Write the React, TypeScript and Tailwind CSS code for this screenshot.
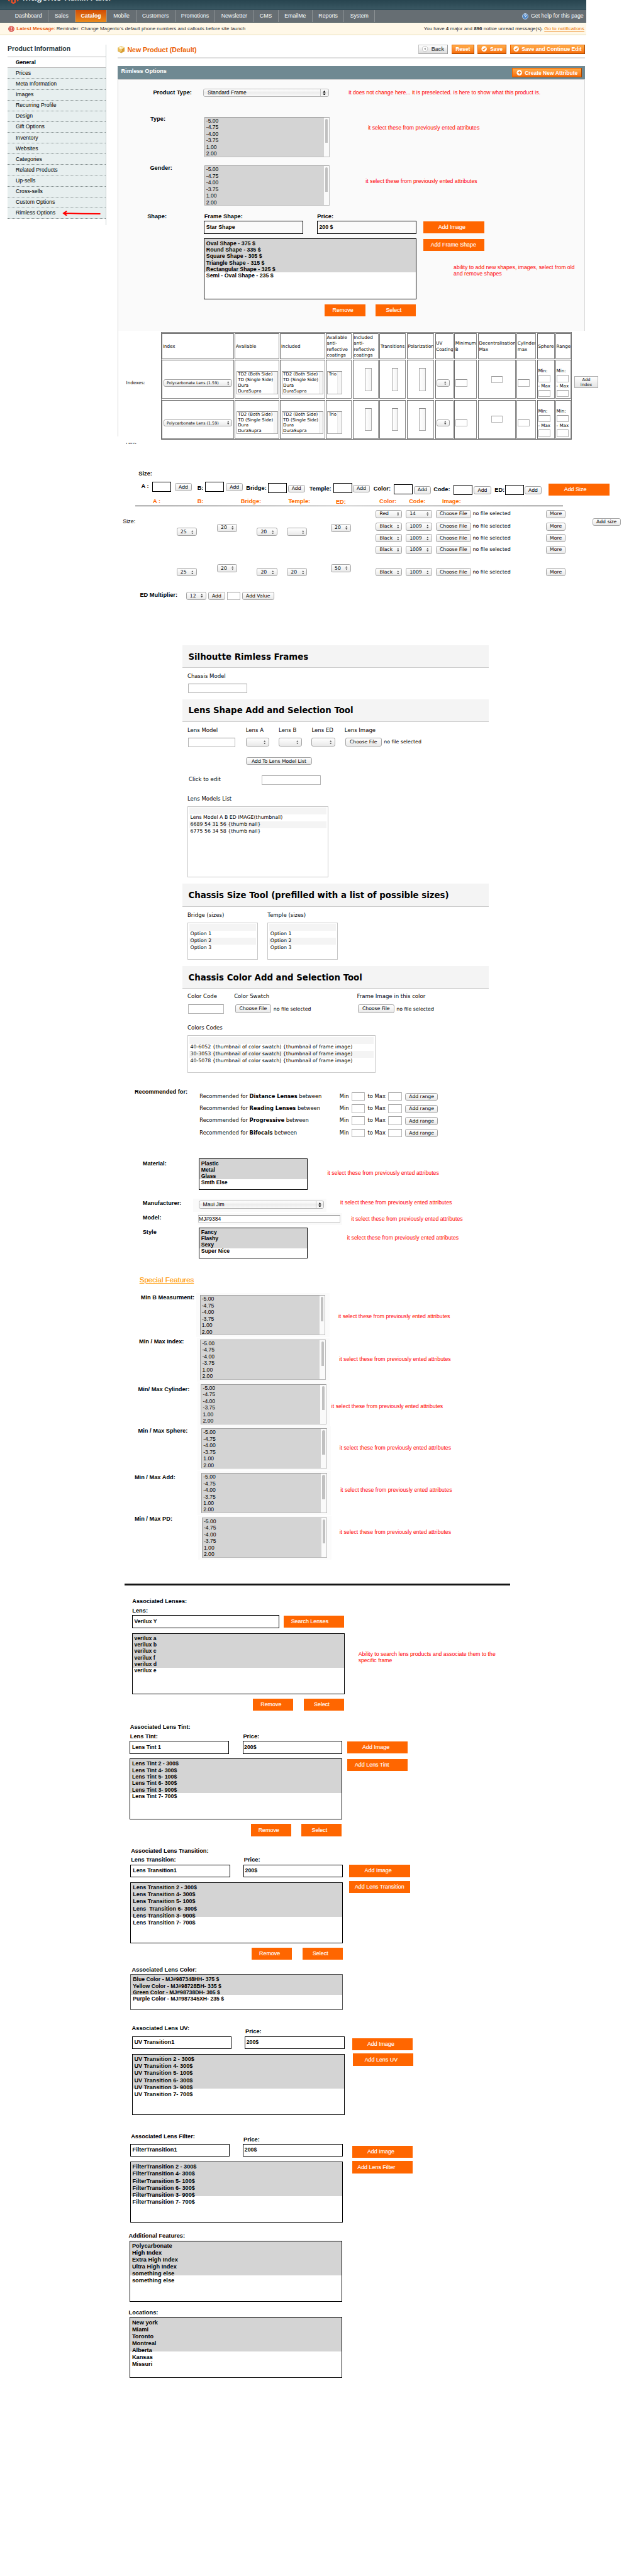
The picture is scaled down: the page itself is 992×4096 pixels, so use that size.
import React from "react";
import { twMerge } from "tailwind-merge";

type Kids = { className?: string; children?: React.ReactNode };

const ui = "font-['DejaVu_Sans',sans-serif]";

/* ---------- small building blocks ---------- */

function Label({ className, children }: Kids) {
  return (
    <div className={twMerge("h-[14px] shrink-0 text-[13px] leading-[14px] font-bold whitespace-nowrap", className)}>
      {children}
    </div>
  );
}

function Note({ className, children }: Kids) {
  return (
    <div className={twMerge("shrink-0 text-[12.25px] leading-[14px] whitespace-nowrap text-[#f00]", className)}>
      {children}
    </div>
  );
}

function Attr({ className }: { className?: string }) {
  return <Note className={className}>it select these from previously ented attributes</Note>;
}

function Flat({ className, children }: Kids) {
  return (
    <button
      className={twMerge(
        "flex h-[27px] shrink-0 items-center bg-[#f60] text-[12.5px] leading-none whitespace-nowrap text-white [-webkit-text-stroke-width:0.2px]",
        className,
      )}
    >
      {children}
    </button>
  );
}

function Box({ className, children }: Kids) {
  return (
    <div
      className={twMerge(
        "flex h-[29px] shrink-0 items-center border border-black text-[12.3px] font-bold whitespace-nowrap",
        className,
      )}
    >
      {children}
    </div>
  );
}

function Bare({ className }: { className?: string }) {
  return <div className={twMerge("shrink-0 border border-black bg-white", className)} />;
}

function Picks({ items, className }: { items: string[]; className?: string }) {
  return (
    <div className={twMerge("shrink-0 overflow-hidden border border-black font-bold whitespace-pre", className)}>
      {items.map((t, i) => (
        <div key={i}>{t}</div>
      ))}
    </div>
  );
}

function Arrows({ className }: { className?: string }) {
  return (
    <svg viewBox="0 0 6 10" className={twMerge("h-[9px] w-[5px] shrink-0", className)}>
      <path d="M3 0 L5.6 3.8 H0.4 Z M3 10 L5.6 6.2 H0.4 Z" fill="#444" />
    </svg>
  );
}

function Aqua({ className, children }: Kids) {
  return (
    <button
      className={twMerge(
        "flex h-[18px] shrink-0 items-center justify-center rounded-[4px] border border-[#a3a3a3] bg-linear-to-b from-white via-[#f4f4f4] to-[#e9e9e9] text-[10.8px] leading-none whitespace-nowrap text-black",
        ui,
        className,
      )}
    >
      {children}
    </button>
  );
}

function Drop({ className, children }: Kids) {
  return (
    <div
      className={twMerge(
        "flex h-[18px] shrink-0 items-center justify-between rounded-[4px] border border-[#a3a3a3] bg-linear-to-b from-white via-[#f4f4f4] to-[#e9e9e9] pr-[6px] pl-[7px] text-[10.8px] leading-none whitespace-nowrap",
        ui,
        className,
      )}
    >
      <span>{children}</span>
      <Arrows />
    </div>
  );
}

function Field({ className }: { className?: string }) {
  return <div className={twMerge("shrink-0 border border-[#b5b5b5] border-t-[#8f8f8f] bg-white", className)} />;
}

function WideSelect({ children }: Kids) {
  return (
    <div className="flex h-[19px] w-[280px] shrink-0 items-center rounded-[4px] border border-[#b4b4b4] bg-linear-to-b from-white via-[#ececec] to-[#fafafa] pl-[8px] text-[12px] leading-none">
      <span className="grow">{children}</span>
      <span className="flex h-full w-[18px] items-center justify-center border-l border-[#c4c4c4]">
        <svg viewBox="0 0 6 10" className="h-[11px] w-[7px]">
          <path d="M3 0 L5.8 4 H0.2 Z M3 10 L5.8 6 H0.2 Z" fill="#000" />
        </svg>
      </span>
    </div>
  );
}

const values = ["-5.00", "-4.75", "-4.00", "-3.75", "1.00", "2.00"];

function ValueList() {
  return (
    <div className="flex h-[90px] w-[280px] shrink-0 border border-[#bdbdbd] border-t-[#9d9d9d] border-l-[#9d9d9d] bg-[#d4d4d4]">
      <div className="grow pl-[3px] text-[12.1px] leading-[14.7px]">
        {values.map((v) => (
          <div key={v}>{v}</div>
        ))}
      </div>
      <div className="flex w-[12px] justify-center bg-[#fafafa] pt-[3px]">
        <div className="h-[54px] w-[6px] rounded-t-full bg-[#c1c1c1]" />
      </div>
    </div>
  );
}

/* ---------- header ---------- */

const nav: [string, string][] = [
  ["Dashboard", "w-[88px]"],
  ["Sales", "w-[60px]"],
  ["Catalog", "w-[71px]"],
  ["Mobile", "w-[65px]"],
  ["Customers", "w-[87px]"],
  ["Promotions", "w-[89px]"],
  ["Newsletter", "w-[86px]"],
  ["CMS", "w-[55px]"],
  ["EmailMe", "w-[76px]"],
  ["Reports", "w-[71px]"],
  ["System", "w-[68px]"],
];

function Header() {
  return (
    <header className="w-[1307px]">
      <div className="flex h-[23px] items-start overflow-hidden border-b-2 border-[#2b4652] bg-linear-to-b from-[#27444f] to-[#3a5863] pl-[17px] text-white">
        <svg viewBox="0 0 26 10" className="h-[9px] w-[26px] shrink-0">
          <path
            d="M0 0 H4 V4 L0 2 Z M22 0 H26 V2 L22 4 Z M7 0 H11 V4.5 L13 6 L15 4.5 V0 H19 V6.5 L13 10 L7 6.5 Z"
            fill="#e8502a"
          />
        </svg>
        <div className="-mt-[19px] ml-[7px] w-[94px] shrink-0 text-[22.5px] leading-[26px]">Magento</div>
        <div className="-mt-[14px] text-[17px] leading-[20px] font-bold whitespace-nowrap text-[#e9eeee]">
          Admin Panel
        </div>
      </div>
      <nav className="flex h-[28px] items-stretch border-b-2 border-[#37474f] bg-[#666e73] pl-[20px] text-[12.3px] text-white">
        {nav.map(([t, w]) => (
          <div
            key={t}
            className={twMerge(
              "flex shrink-0 items-center justify-center border-r border-[#8b9194]",
              w,
              t === "Catalog" && "bg-linear-to-b from-[#d14c05] to-[#ea8a1b] font-bold",
            )}
          >
            {t}
          </div>
        ))}
        <div className="ml-auto flex items-center pr-[6px] whitespace-nowrap">
          <svg viewBox="0 0 14 14" className="mr-[5px] size-[14px]">
            <circle cx="7" cy="7" r="6.3" fill="#4f86c4" stroke="#c9dcf0" strokeWidth="1.2" />
            <path
              d="M4.8 5.4 C4.8 2.9 9.2 2.9 9.2 5.3 C9.2 6.8 7 6.8 7 8.4 M7 9.7 V11"
              stroke="#fff"
              strokeWidth="1.5"
              fill="none"
            />
          </svg>
          Get help for this page
        </div>
      </nav>
      <div className="flex h-[28px] items-center border-b border-[#eadfb9] bg-[#fff8e8] pr-[4px] pl-[18px] text-[11.2px] text-[#2f2f2f]">
        <svg viewBox="0 0 14 14" className="mr-[5px] size-[14px]">
          <circle cx="7" cy="7" r="6.4" fill="#e0544c" stroke="#b9413b" strokeWidth="0.8" />
          <circle cx="7" cy="7" r="5" fill="none" stroke="#f6b8b2" strokeWidth="0.8" />
          <path d="M7 3 V8.2 M7 9.5 V11" stroke="#fff" strokeWidth="1.7" />
        </svg>
        <b className="w-[89px] whitespace-nowrap text-[#ea5c0a]">Latest Message:</b>
        <span className="whitespace-nowrap">
          Reminder: Change Magento`s default phone numbers and callouts before site launch
        </span>
        <span className="ml-auto whitespace-nowrap">
          You have <b>4</b> major and <b>896</b> notice unread message(s).{" "}
          <span className="text-[#ea7601] underline">Go to notifications</span>
        </span>
      </div>
    </header>
  );
}

/* ---------- sidebar ---------- */

const tabs = [
  "Prices",
  "Meta Information",
  "Images",
  "Recurring Profile",
  "Design",
  "Gift Options",
  "Inventory",
  "Websites",
  "Categories",
  "Related Products",
  "Up-sells",
  "Cross-sells",
  "Custom Options",
  "Rimless Options",
];

function Sidebar() {
  return (
    <aside className="mt-[20px] ml-[17px] h-[403px] w-[220px] shrink-0 border-r-2 border-[#c3cccc]">
      <div className="h-[28px] border-b border-[#b6b6b6] pt-[2px] text-[14.7px] leading-[18px] font-bold text-[#2d3b41]">
        Product Information
      </div>
      <div className="h-[25px] border-b border-[#b6b6b6] pl-[18px] text-[12px] leading-[25px] font-bold">General</div>
      {tabs.map((t) => (
        <div
          key={t}
          className="flex h-[24px] items-center border-b border-dotted border-[#7f8a8a] bg-[#e7efef] pl-[18px] text-[12.2px]"
        >
          {t}
          {t === "Rimless Options" && (
            <svg viewBox="0 0 86 12" className="ml-[15px] h-[12px] w-[86px]">
              <path d="M85 7 L44 6.6 L5 5.6 M10 1 L3 5.6 L10 11" stroke="#f00" strokeWidth="3" fill="none" />
            </svg>
          )}
        </div>
      ))}
    </aside>
  );
}

/* ---------- options panel ---------- */

function Glossy({ className, children }: Kids) {
  return (
    <button
      className={twMerge(
        "flex h-[21px] shrink-0 items-center justify-center gap-[6px] border border-[#ed6502] border-r-[#a04300] border-b-[#a04300] bg-linear-to-b from-[#ffac47] to-[#f76c02] text-[12px] leading-none font-bold whitespace-nowrap text-white",
        className,
      )}
    >
      {children}
    </button>
  );
}

function Dot({ kind }: { kind: "check" | "plus" | "back" }) {
  return (
    <svg viewBox="0 0 13 13" className="size-[13px] shrink-0">
      <circle cx="6.5" cy="6.5" r="6" fill="#fff" stroke={kind === "back" ? "#aaa" : "none"} />
      {kind === "check" && <path d="M3.8 7 L5.8 9 L9.4 4" stroke="#f17a1a" strokeWidth="1.8" fill="none" />}
      {kind === "plus" && <path d="M6.5 3 V10 M3 6.5 H10" stroke="#f17a1a" strokeWidth="1.9" />}
      {kind === "back" && <path d="M8 3.8 V9.2 L4.4 6.5 Z" fill="#888" />}
    </svg>
  );
}

function TitleRow() {
  return (
    <div className="flex h-[31px] w-[1042px] items-start border-b-4 border-[#dfdfdf]">
      <svg viewBox="0 0 16 16" className="mt-[4px] mr-[6px] size-[16px]">
        <path d="M8 0.5 L15 4 V12 L8 15.5 L1 12 V4 Z" fill="#eec15a" stroke="#b98a2c" strokeWidth="0.8" />
        <path d="M8 0.5 L15 4 L8 7.5 L1 4 Z" fill="#fbe7a8" />
        <path d="M8 7.5 L15 4 V12 L8 15.5 Z" fill="#d99d31" />
        <path d="M5 3 L11 6 M4 5.5 L8 7.5 V11" stroke="#fffbe8" strokeWidth="1.4" fill="none" />
      </svg>
      <h1 className="mt-[4px] text-[14.8px] leading-[18px] font-bold whitespace-nowrap text-[#eb5e00]">
        New Product (Default)
      </h1>
      <div className="ml-auto flex gap-[8px]">
        <button className="flex h-[21px] w-[66px] items-center justify-center gap-[7px] border border-[#c2c2c2] border-r-[#999] border-b-[#999] bg-linear-to-b from-white to-[#dcdcdc] text-[12px] leading-none font-bold text-[#555]">
          <Dot kind="back" />
          Back
        </button>
        <Glossy className="w-[50px]">Reset</Glossy>
        <Glossy className="w-[64px]">
          <Dot kind="check" />
          Save
        </Glossy>
        <Glossy className="w-[167px]">
          <Dot kind="check" />
          Save and Continue Edit
        </Glossy>
      </div>
    </div>
  );
}

const shapes = [
  "Oval Shape - 375 $",
  "Round Shape - 335 $",
  "Square Shape - 305 $",
  "Triangle Shape - 315 $",
  "Rectangular Shape - 325 $",
  "Semi - Oval Shape - 235 $",
];

function OptionsPanel() {
  return (
    <section className="mt-[18px] w-[1042px]">
      <div className="flex h-[29px] items-center justify-between bg-[#6f8992] pr-[7px] pl-[8px]">
        <h2 className="-mt-[4px] text-[12.9px] font-bold text-white">Rimless Options</h2>
        <Glossy className="w-[155px]">
          <Dot kind="plus" />
          Create New Attribute
        </Glossy>
      </div>
      <div className="h-[561px] border-x border-t border-[#d6d6d6] bg-[#fafafa] pt-[19px]">
        <div className="flex h-[63px] pl-[78px]">
          <Label className="mt-[2px] w-[112px]">Product Type:</Label>
          <WideSelect>Standard Frame</WideSelect>
          <Note className="mt-[2px] ml-[44px]">
            it does not change here... it is preselected. Is here to show what this product is.
          </Note>
        </div>
        <div className="flex h-[109px] pl-[72px]">
          <Label className="-mt-[2px] w-[120px]">Type:</Label>
          <ValueList />
          <Attr className="mt-[18px] ml-[85px]" />
        </div>
        <div className="flex h-[106px] pl-[71px]">
          <Label className="-mt-[2px] w-[121px]">Gender:</Label>
          <ValueList />
          <Attr className="mt-[27px] ml-[80px]" />
        </div>
        <div className="flex h-[17px] pl-[65px]">
          <Label className="w-[127px]">Shape:</Label>
          <Label className="w-[252px]">Frame Shape:</Label>
          <Label>Price:</Label>
        </div>
        <div className="flex h-[40px] pl-[191px]">
          <Box className="w-[222px] pl-[4px]">Star Shape</Box>
          <Box className="ml-[30px] w-[222px] pl-[4px]">200 $</Box>
          <Flat className="mt-px ml-[15px] w-[136px] pl-[34px]">Add Image</Flat>
        </div>
        <div className="flex h-[146px] pl-[191px]">
          <Picks
            items={shapes}
            className="h-[135px] w-[474px] bg-[linear-gradient(#d4d4d4_75px,#fff_75px)] pt-[2px] pl-[4px] text-[12.4px] leading-[14.4px]"
          />
          <div className="ml-[15px]">
            <Flat className="mt-px w-[136px] pl-[17px]">Add Frame Shape</Flat>
            <Note className="mt-[29px] ml-[68px] leading-[14.4px]">
              ability to add new shapes, images, select from old
              <br />
              and remove shapes
            </Note>
          </div>
        </div>
        <div className="flex gap-[23px] pl-[461px]">
          <Flat className="w-[90px] pl-[17px]">Remove</Flat>
          <Flat className="w-[90px] pl-[23px]">Select</Flat>
        </div>
      </div>
    </section>
  );
}

/* ---------- indexes table ---------- */

const heads: string[][] = [
  ["Index"],
  ["Available"],
  ["Included"],
  ["Avaliable", "anti-", "reflective", "coatings"],
  ["Included", "anti-", "reflective", "coatings"],
  ["Transitions"],
  ["Polarization"],
  ["UV", "Coating"],
  ["Minimum", "B"],
  ["Decentralisation", "Max"],
  ["Cylinder", "max"],
  ["Sphere"],
  ["Range"],
];

const cell = "overflow-hidden border border-[#8a8a8a] border-t-[#555] border-l-[#6a6a6a]";

function Mini({ items, className }: { items: string[]; className?: string }) {
  return (
    <div className={twMerge("flex shrink-0 overflow-hidden border border-[#aaa] border-t-[#888] bg-white", className)}>
      <div className="grow pl-[2px] text-[9.8px] leading-[12.3px] whitespace-nowrap">
        {items.map((t) => (
          <div key={t}>{t}</div>
        ))}
      </div>
      <div className="w-[9px] shrink-0 border-l border-[#ececec] bg-[#f6f6f6]" />
    </div>
  );
}

function MinMax() {
  return (
    <div className={cell}>
      <div className="mt-[17px] pl-px leading-[15px]">Min:</div>
      <Field className="ml-[2px] h-[16px] w-[26px]" />
      <div className="pl-px leading-[17px] whitespace-nowrap">- Max</div>
      <Field className="ml-[2px] h-[16px] w-[26px]" />
    </div>
  );
}

const coats = ["TD2 (Both Side)", "TD (Single Side)", "Dura", "DuraSupra"];

function IndexRow() {
  return (
    <>
      <div className={cell}>
        <Drop className="mt-[42px] ml-[3px] h-[16px] w-[153px] pl-[5px] text-[8.9px]">Polycarbonate Lens (1.59)</Drop>
      </div>
      <div className={cell}>
        <Mini items={coats} className="mt-[24px] ml-[2px] h-[51px] w-[93px]" />
      </div>
      <div className={cell}>
        <Mini items={coats} className="mt-[24px] ml-[2px] h-[51px] w-[93px]" />
      </div>
      <div className={cell}>
        <Mini items={["Trio"]} className="mt-[24px] ml-[2px] h-[51px] w-[33px]" />
      </div>
      {["c", "t", "p"].map((k) => (
        <div key={k} className={cell}>
          <div className="mt-[17px] ml-[26px] h-[51px] w-[15px] border border-[#aaa] border-t-[#888] bg-linear-to-r from-white to-[#f3f3f3]" />
        </div>
      ))}
      <div className={cell}>
        <Drop className="mt-[42px] ml-[2px] h-[16px] w-[30px]" />
      </div>
      <div className={cell}>
        <Field className="mt-[42px] ml-[2px] h-[16px] w-[26px]" />
      </div>
      <div className={cell}>
        <Field className="mt-[34px] ml-[28px] h-[16px] w-[26px]" />
      </div>
      <div className={cell}>
        <Field className="mt-[42px] ml-[2px] h-[16px] w-[26px]" />
      </div>
      <MinMax />
      <MinMax />
    </>
  );
}

function Indexes() {
  return (
    <section className={twMerge("flex h-[235px] items-start border-l border-[#d6d6d6] text-[10px]", ui)}>
      <div className="mt-[109px] ml-[18px] w-[77px] shrink-0 leading-[14px]">Indexes:</div>
      <div className="mt-[3px] grid h-[240px] w-[917px] shrink-0 grid-cols-[161px_99px_100px_58px_58px_59px_61px_41px_51px_84px_44px_39px_35px] grid-rows-[57px_87px_87px] gap-x-[1.9px] gap-y-[2px] border border-[#777] border-b-[#555] pt-[1.5px] pl-px">
        {heads.map((lines, i) => (
          <div key={i} className={twMerge(cell, "flex flex-col justify-center pl-px leading-[13.3px] whitespace-nowrap")}>
            {lines.map((l) => (
              <div key={l}>{l}</div>
            ))}
          </div>
        ))}
        <IndexRow />
        <IndexRow />
      </div>
      <button className="mt-[101px] ml-[5px] h-[27px] w-[54px] shrink-0 border border-[#aaa] bg-linear-to-b from-white to-[#e4e4e4] text-[9.5px] leading-[11.5px]">
        Add
        <br />
        index
      </button>
    </section>
  );
}

/* ---------- sizes ---------- */

const colorRows: [string, string, string][] = [
  ["Red", "14", ""],
  ["Black", "1009", "mt-[10px]"],
  ["Black", "1009", "mt-[8px]"],
  ["Black", "1009", "mt-[8px]"],
  ["Black", "1009", "mt-[32px]"],
];

function Sizes() {
  return (
    <section>
      <Label className="mt-[59px] ml-[47px]">Size:</Label>
      <div className="flex h-[48px] items-start pl-[53px]">
        <Label className="mt-[15px] w-[25px]">A :</Label>
        <Bare className="mt-[11px] h-[23px] w-[42px]" />
        <Aqua className="mt-[15px] ml-[8px] w-[38px]">Add</Aqua>
        <Label className="mt-[18px] ml-[12px] w-[18px]">B:</Label>
        <Bare className="mt-[11px] h-[23px] w-[42px]" />
        <Aqua className="mt-[15px] ml-[4px] w-[38px]">Add</Aqua>
        <Label className="mt-[18px] ml-[7px] w-[48px]">Bridge:</Label>
        <Bare className="mt-[14px] h-[23px] w-[42px]" />
        <Aqua className="mt-[18px] ml-[3px] w-[38px]">Add</Aqua>
        <Label className="mt-[20px] ml-[10px] w-[53px]">Temple:</Label>
        <Bare className="mt-[14px] h-[23px] w-[42px]" />
        <Aqua className="mt-[18px] ml-[2px] w-[38px]">Add</Aqua>
        <Label className="mt-[20px] ml-[8px] w-[45px]">Color:</Label>
        <Bare className="mt-[17px] h-[23px] w-[42px]" />
        <Aqua className="mt-[21px] ml-[3px] w-[38px]">Add</Aqua>
        <Label className="mt-[21px] ml-[6px] w-[45px]">Code:</Label>
        <Bare className="mt-[18px] h-[23px] w-[42px]" />
        <Aqua className="mt-[22px] ml-[3px] w-[38px]">Add</Aqua>
        <Label className="mt-[23px] ml-[8px] w-[23px]">ED:</Label>
        <Bare className="mt-[18px] h-[23px] w-[42px]" />
        <Aqua className="mt-[22px] ml-[2px] w-[38px]">Add</Aqua>
        <Flat className="mt-[16px] ml-[16px] w-[136px] pl-[34px]">Add Size</Flat>
      </div>
      <div className="flex h-[17px] pl-[79px] text-[#f60]">
        <Label className="w-[99px]">A :</Label>
        <Label className="w-[97px]">B:</Label>
        <Label className="w-[106px]">Bridge:</Label>
        <Label className="w-[106px]">Temple:</Label>
        <Label className="mt-px w-[97px]">ED:</Label>
        <Label className="w-[66px]">Color:</Label>
        <Label className="w-[74px]">Code:</Label>
        <Label>Image:</Label>
      </div>
      <div className="ml-[40px] h-[1.4px] w-[953px] bg-linear-to-r from-black via-[#777] to-black" />
      <div className="flex h-[190px] items-start pl-[12px]">
        <div className="mt-[27px] w-[120px] shrink-0 text-[12.6px] leading-[14px]">Size:</div>
        <div className="mt-[48px] flex w-[90px] shrink-0 flex-col gap-[72px]">
          <Drop className="w-[45px]">25</Drop>
          <Drop className="w-[45px]">25</Drop>
        </div>
        <div className="mt-[39px] flex w-[89px] shrink-0 flex-col gap-[72px]">
          <Drop className="w-[45px]">20</Drop>
          <Drop className="w-[45px]">20</Drop>
        </div>
        <div className="mt-[48px] flex w-[67px] shrink-0 flex-col gap-[72px]">
          <Drop className="w-[45px]">20</Drop>
          <Drop className="w-[45px]">20</Drop>
        </div>
        <div className="mt-[48px] flex w-[98px] shrink-0 flex-col gap-[72px]">
          <Drop className="w-[45px]" />
          <Drop className="w-[45px]">20</Drop>
        </div>
        <div className="mt-[39px] flex w-[100px] shrink-0 flex-col gap-[72px]">
          <Drop className="w-[45px]">20</Drop>
          <Drop className="w-[45px]">50</Drop>
        </div>
        <div className="mt-[8px] shrink-0">
          {colorRows.map(([c, n, gap], i) => (
            <div key={i} className={twMerge("flex h-[18px] items-center", gap)}>
              <Drop className="w-[59px]">{c}</Drop>
              <Drop className="ml-[8px] w-[59px]">{n}</Drop>
              <Aqua className="ml-[8px] w-[78px]">Choose File</Aqua>
              <div className={twMerge("ml-[4px] w-[164px] text-[11.1px]", ui)}>no file selected</div>
              <Aqua className="w-[43px]">More</Aqua>
            </div>
          ))}
        </div>
        <Aqua className="mt-[26px] ml-[60px] w-[63px]">Add size</Aqua>
      </div>
      <div className="flex h-[120px] items-start pl-[50px]">
        <Label className="mt-px w-[103px]">ED Multiplier:</Label>
        <Drop className="mt-px w-[45px]">12</Drop>
        <Aqua className="mt-px ml-[4px] w-[38px]">Add</Aqua>
        <Field className="ml-[4px] h-[19px] w-[30px]" />
        <Aqua className="mt-px ml-[4px] w-[71px]">Add Value</Aqua>
      </div>
    </section>
  );
}

/* ---------- rimless frames tools ---------- */

function Band({ className, children }: Kids) {
  return (
    <h3
      className={twMerge(
        "flex h-[51px] items-center border-b border-[#c9c9c9] bg-[#f4f4f4] pt-[2px] pl-[13px] text-[18.7px] font-bold whitespace-nowrap",
        className,
      )}
    >
      {children}
    </h3>
  );
}

function Striped({ items, className }: { items: string[]; className?: string }) {
  return (
    <div
      className={twMerge(
        "shrink-0 border border-t-2 border-[#c6c6c6] p-[3px] pt-[2px] text-[11px] leading-[15.3px] whitespace-nowrap",
        className,
      )}
    >
      <div className="h-[15.3px] bg-[#f4f4f4]" />
      {items.map((t, i) => (
        <div key={t} className={twMerge("pl-[2px]", i % 2 === 1 && "bg-[#f4f4f4]")}>
          {t}
        </div>
      ))}
    </div>
  );
}

function FilePick({ className }: { className?: string }) {
  return (
    <div className={twMerge("flex shrink-0 items-center text-[11px] whitespace-nowrap", className)}>
      <Aqua className="mr-[5px] h-[20px] w-[81px]">Choose File</Aqua>
      no file selected
    </div>
  );
}

function RimlessTools() {
  return (
    <section className={twMerge("ml-[145px] w-[683px] text-[12px] leading-[16px]", ui)}>
      <Band>Silhoutte Rimless Frames</Band>
      <div className="h-[69px] pt-[11px] pl-[11px]">
        <div className="h-[24px]">Chassis Model</div>
        <Field className="ml-[2px] h-[21px] w-[131px]" />
      </div>
      <Band>Lens Shape Add and Selection Tool</Band>
      <div className="h-[361px] pt-[11px] pl-[11px]">
        <div className="flex h-[24px] whitespace-nowrap">
          <div className="w-[130px]">Lens Model</div>
          <div className="w-[73.5px]">Lens A</div>
          <div className="w-[73.5px]">Lens B</div>
          <div className="w-[73.5px]">Lens ED</div>
          <div>Lens Image</div>
        </div>
        <div className="flex h-[44px] items-start pl-[2px]">
          <Field className="h-[21px] w-[105px]" />
          <Drop className="ml-[23px] h-[20px] w-[52px]" />
          <Drop className="ml-[21.5px] h-[20px] w-[52px]" />
          <Drop className="ml-[21.5px] h-[20px] w-[52px]" />
          <FilePick className="ml-[23px]" />
        </div>
        <div className="h-[40px]">
          <Aqua className="ml-[130px] h-[17px] w-[148px]">Add To Lens Model List</Aqua>
        </div>
        <div className="flex h-[45px] pl-[3px]">
          <div className="mt-px w-[163px]">Click to edit</div>
          <Field className="h-[21px] w-[131px]" />
        </div>
        <div className="h-[24px]">Lens Models List</div>
        <Striped
          items={["Lens Model A B ED IMAGE(thumbnail)", "6689 54 31 56 {thumb nail}", "6775 56 34 58 {thumb nail}"]}
          className="h-[159px] w-[314px]"
        />
      </div>
      <Band>Chassis Size Tool (prefilled with a list of possible sizes)</Band>
      <div className="flex h-[132px] gap-[21.5px] pt-[11px] pl-[11px]">
        <div>
          <div className="h-[24px]">Bridge (sizes)</div>
          <Striped items={["Option 1", "Option 2", "Option 3"]} className="h-[83px] w-[157px]" />
        </div>
        <div>
          <div className="h-[24px]">Temple (sizes)</div>
          <Striped items={["Option 1", "Option 2", "Option 3"]} className="h-[83px] w-[157px]" />
        </div>
      </div>
      <Band>Chassis Color Add and Selection Tool</Band>
      <div className="h-[222px] pt-[10px] pl-[11px]">
        <div className="flex h-[25px] whitespace-nowrap">
          <div className="w-[104px]">Color Code</div>
          <div className="w-[274px]">Color Swatch</div>
          <div>Frame Image in this color</div>
        </div>
        <div className="flex h-[45px] items-start pl-[2px]">
          <Field className="h-[21px] w-[79px]" />
          <FilePick className="ml-[25px] w-[274px]" />
          <FilePick />
        </div>
        <div className="h-[24px]">Colors Codes</div>
        <Striped
          items={[
            "40-6052 {thumbnail of color swatch) {thumbnail of frame image)",
            "30-3053 {thumbnail of color swatch) {thumbnail of frame image)",
            "40-5078 {thumbnail of color swatch) {thumbnail of frame image)",
          ]}
          className="h-[84px] w-[420px]"
        />
      </div>
    </section>
  );
}

function Recommended() {
  return (
    <section className="flex h-[157px] items-start pl-[38px]">
      <Label className="w-[145px]">Recommended for:</Label>
      <div className={twMerge("mt-[9px] text-[11.7px] leading-[19px]", ui)}>
        {["Distance Lenses", "Reading Lenses", "Progressive", "Bifocals"].map((n) => (
          <div key={n} className="flex h-[27px] items-start whitespace-nowrap">
            <div className="w-[312px]">
              Recommended for <b>{n}</b> between
            </div>
            <div className="w-[27px]">Min</div>
            <Field className="h-[19px] w-[30px]" />
            <div className="ml-[6px] w-[46px]">to Max</div>
            <Field className="h-[19px] w-[30px]" />
            <Aqua className="mt-px ml-[8px] w-[72px]">Add range</Aqua>
          </div>
        ))}
      </div>
    </section>
  );
}

/* ---------- attributes and features ---------- */

const shortList =
  "h-[69px] w-[243px] bg-[linear-gradient(#d4d4d4_45px,#fff_45px)] pt-[1.5px] pl-[4px] text-[12.2px] leading-[14.4px]";

function Attributes() {
  return (
    <section>
      <div className="flex h-[89px] items-start pl-[56px]">
        <Label className="mt-[3px] w-[125px]">Material:</Label>
        <Picks items={["Plastic", "Metal", "Glass", "Smth Else"]} className={shortList} />
        <Attr className="mt-[24px] ml-[44px]" />
      </div>
      <div className="flex h-[32px] items-start pl-[56px]">
        <Label className="mt-[3px] w-[113px]">Manufacturer:</Label>
        <div className="h-[29px] w-[297px] shrink-0 bg-[#fafafa] pt-[4px] pl-[12px]">
          <WideSelect>Maui Jim</WideSelect>
        </div>
        <Attr className="mt-[2px] ml-[31px]" />
      </div>
      <div className="flex h-[32px] items-start pl-[56px]">
        <Label className="mt-[3px] w-[123px]">Model:</Label>
        <div className="h-[27px] w-[322px] shrink-0 bg-[#fafafa] pt-[5px] pl-px">
          <div className="h-[17px] w-[317px] border border-[#ccc] border-t-[#999] bg-white text-[12px] leading-[16px]">
            MJ#9384
          </div>
        </div>
        <Attr className="mt-[6px] ml-[20px]" />
      </div>
      <div className="flex h-[106px] items-start pl-[56px]">
        <Label className="mt-[4px] w-[125px]">Style</Label>
        <Picks items={["Fancy", "Flashy", "Sexy", "Super Nice"]} className={shortList} />
        <Attr className="mt-[16px] ml-[88px]" />
      </div>
    </section>
  );
}

const features: [string, string, string][] = [
  ["Min B Measurment:", "mt-[2px] ml-[52px] w-[123.5px]", "mt-[45px] ml-[20px]"],
  ["Min / Max Index:", "mt-[2px] ml-[48px] w-[128.5px]", "mt-[40px] ml-[21px]"],
  ["Min/ Max Cylinder:", "mt-[9px] ml-[46px] w-[132px]", "mt-[46px] ml-[2px]"],
  ["Min / Max Sphere:", "mt-[2px] ml-[46px] w-[133px]", "mt-[40px] ml-[19px]"],
  ["Min / Max Add:", "mt-[7px] ml-[38px] w-[141px]", "mt-[35px] ml-[21px]"],
  ["Min / Max PD:", "ml-[38px] w-[142px]", "mt-[29px] ml-[18px]"],
];

function Features() {
  return (
    <section>
      <h3 className="ml-[49px] h-[41px] pt-px text-[16.2px] leading-[22px] text-[#f90] underline [-webkit-text-stroke-width:0.3px]">
        Special Features
      </h3>
      {features.map(([name, label, note]) => (
        <div key={name} className="flex h-[99.2px] items-start">
          <Label className={label}>{name}</Label>
          <div className="h-[98px] w-[297px] shrink-0 bg-[#fbfbfb] pt-[4px] pl-[8px]">
            <ValueList />
          </div>
          <Attr className={note} />
        </div>
      ))}
    </section>
  );
}

/* ---------- associated products ---------- */

function RemoveSelect({ className }: { className?: string }) {
  return (
    <div className={twMerge("mt-[10px] flex gap-[23px]", className)}>
      <Flat className="w-[90px] pl-[17px]">Remove</Flat>
      <Flat className="w-[90px] pl-[23px]">Select</Flat>
    </div>
  );
}

const tall = "h-[136px] w-[474px] bg-[linear-gradient(#d4d4d4_76px,#fff_76px)] pt-[3px] pl-[4px]";

function Associated() {
  return (
    <>
      <section className="mt-[29px] ml-[32px]">
        <Label className="ml-px">Associated Lenses:</Label>
        <Label className="mt-[7px] ml-px">Lens:</Label>
        <div className="mt-[3px] flex h-[40px] items-start">
          <Box className="w-[329px] pl-[4px] text-[12px]">Verilux Y</Box>
          <Flat className="mt-px ml-[9px] w-[135px] pl-[17px]">Search Lenses</Flat>
        </div>
        <div className="flex items-start">
          <Picks
            items={["verilux a", "verilux b", "verilux c", "verilux f", "verilux d", "verilux e"]}
            className={twMerge(tall, "text-[12.2px] leading-[14.4px]")}
          />
          <Note className="mt-[39px] ml-[31px] leading-[14.4px]">
            Ability to search lens products and associate them to the
            <br />
            specific frame
          </Note>
        </div>
        <RemoveSelect className="pl-[270px]" />
      </section>

      <section className="mt-[29px] ml-[27px]">
        <Label className="ml-px">Associated Lens Tint:</Label>
        <div className="mt-[7px] flex h-[17px] pl-px">
          <Label className="w-[252px]">Lens Tint:</Label>
          <Label>Price:</Label>
        </div>
        <div className="flex h-[40px] items-start">
          <Box className="w-[222px] pl-[4px]">Lens Tint 1</Box>
          <Box className="ml-[30px] w-[222px] pl-[2px]">200$</Box>
          <Flat className="mt-px ml-[11px] w-[135px] pl-[34px]">Add Image</Flat>
        </div>
        <div className="flex items-start">
          <Picks
            items={[
              "Lens Tint 2 - 300$",
              "Lens Tint 4- 300$",
              "Lens Tint 5- 100$",
              "Lens Tint 6- 300$",
              "Lens Tint 3- 900$",
              "Lens Tint 7- 700$",
            ]}
            className={twMerge(tall, "text-[12.4px] leading-[14.4px]")}
          />
          <Flat className="mt-px ml-[11px] w-[135px] pl-[17px]">Add Lens Tint</Flat>
        </div>
        <RemoveSelect className="pl-[270px]" />
      </section>

      <section className="mt-[25px] ml-[29px]">
        <Label className="ml-px">Associated Lens Transition:</Label>
        <div className="mt-[7px] flex h-[17px] pl-px">
          <Label className="w-[252px]">Lens Transition:</Label>
          <Label>Price:</Label>
        </div>
        <div className="flex h-[40px] items-start">
          <Box className="w-[222px] pl-[4px]">Lens Transition1</Box>
          <Box className="ml-[30px] w-[222px] pl-[2px]">200$</Box>
          <Flat className="mt-px ml-[14px] w-[135px] pl-[34px]">Add Image</Flat>
        </div>
        <div className="flex items-start">
          <Picks
            items={[
              "Lens Transition 2 - 300$",
              "Lens Transition 4- 300$",
              "Lens Transition 5- 100$",
              "Lens  Transition 6- 300$",
              "Lens Transition 3- 900$",
              "Lens Transition 7- 700$",
            ]}
            className={twMerge(tall, "text-[12.6px] leading-[15.6px]")}
          />
          <Flat className="-mt-[3px] ml-[14px] w-[135px] pl-[12px]">Add Lens Transition</Flat>
        </div>
        <RemoveSelect className="pl-[270px]" />
      </section>

      <section className="mt-[15.5px] ml-[29px]">
        <Label className="ml-[3px]">Associated Lens Color:</Label>
        <Picks
          items={[
            "Blue Color - MJ#987348HH- 375 $",
            "Yellow Color - MJ#98728BH- 335 $",
            "Green Color - MJ#98738DH- 305 $",
            "Purple Color - MJ#987345XH- 235 $",
          ]}
          className="mt-[2.5px] h-[80px] w-[474px] rounded-[1px] border-[#555] bg-[linear-gradient(#d4d4d4_45px,#fff_45px)] pt-[3px] pl-[4px] text-[12.2px] leading-[14.5px]"
        />
      </section>

      <section className="mt-[33px] ml-[32px]">
        <div className="flex h-[25px] items-start">
          <Label className="w-[253px]">Associated Lens UV:</Label>
          <Label className="mt-[8px]">Price:</Label>
        </div>
        <div className="flex h-[40px] items-start">
          <Box className="w-[222px] pl-[4px] text-[12.8px]">UV Transition1</Box>
          <Box className="ml-[30px] w-[222px] pl-[2px]">200$</Box>
          <Flat className="mt-[5px] ml-[17px] w-[135px] pl-[34px]">Add Image</Flat>
        </div>
        <div className="flex items-start">
          <Picks
            items={[
              "UV Transition 2 - 300$",
              "UV Transition 4- 300$",
              "UV Transition 5- 100$",
              "UV Transition 6- 300$",
              "UV Transition 3- 900$",
              "UV Transition 7- 700$",
            ]}
            className={twMerge(tall, "text-[12.9px] leading-[15.6px]")}
          />
          <Flat className="-mt-px ml-[19px] w-[135px] pl-[26px]">Add Lens UV</Flat>
        </div>
      </section>

      <section className="mt-[41px] ml-[28px]">
        <div className="flex h-[23px] items-start pl-[2px]">
          <Label className="w-[251px]">Associated Lens Filter:</Label>
          <Label className="mt-[6px]">Price:</Label>
        </div>
        <div className="flex h-[40px] items-start">
          <Box className="w-[222px] pl-[4px] text-[12.8px]">FilterTransition1</Box>
          <Box className="ml-[30px] w-[222px] pl-[2px]">200$</Box>
          <Flat className="mt-[5px] ml-[21px] w-[135px] pl-[34px]">Add Image</Flat>
        </div>
        <div className="flex items-start">
          <Picks
            items={[
              "FilterTransition 2 - 300$",
              "FilterTransition 4- 300$",
              "FilterTransition 5- 100$",
              "FilterTransition 6- 300$",
              "FilterTransition 3- 900$",
              "FilterTransition 7- 700$",
            ]}
            className={twMerge(tall, "text-[12.8px] leading-[15.6px]")}
          />
          <Flat className="-mt-px ml-[21px] w-[135px] pl-[12px]">Add Lens Filter</Flat>
        </div>
      </section>

      <section className="mt-[22px] ml-[27px]">
        <Label className="-ml-[2px]">Additional Features:</Label>
        <Picks
          items={["Polycarbonate", "High Index", "Extra High Index", "Ultra High Index", "something else", "something else"]}
          className={twMerge(tall, "mt-[4px] text-[13px] leading-[15.6px]")}
        />
        <Label className="mt-[17px] -ml-[2px]">Locations:</Label>
        <Picks
          items={["New york", "Miami", "Toronto", "Montreal", "Alberta", "Kansas", "Missuri"]}
          className={twMerge(tall, "mt-[4px] text-[13px] leading-[15.6px]")}
        />
      </section>
    </>
  );
}

export default function App() {
  return (
    <div className="h-[5744px] w-[1391px] overflow-hidden bg-white font-['Liberation_Sans',Arial,sans-serif] text-black [zoom:0.713]">
      <Header />
      <div className="flex items-start">
        <Sidebar />
        <main className="mt-[20px] ml-[25px] w-[1129px] shrink-0">
          <TitleRow />
          <OptionsPanel />
          <Indexes />
          <div className="mt-[14px] ml-[19px] flex h-[3px] items-center overflow-hidden font-['DejaVu_Sans',sans-serif] text-[10px] leading-[10px]">
            Lens
          </div>
          <Sizes />
          <RimlessTools />
          <Recommended />
          <Attributes />
          <Features />
          <div className="mt-[53px] ml-[16px] h-[3px] w-[860px] bg-[#151515]" />
          <Associated />
        </main>
      </div>
    </div>
  );
}
